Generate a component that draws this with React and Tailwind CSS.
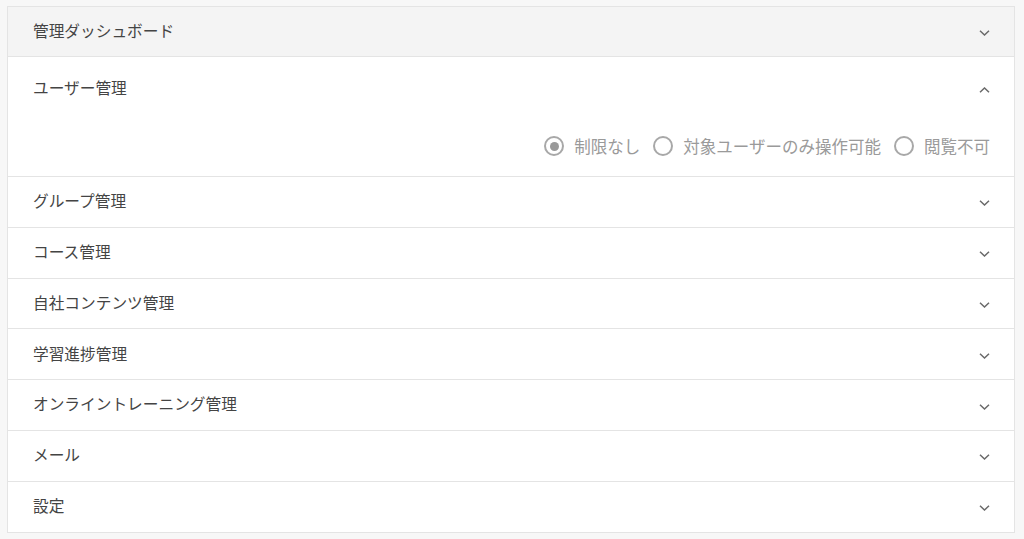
import { useState } from 'react';

const sections = [
  'ユーザー管理',
  'グループ管理',
  'コース管理',
  '自社コンテンツ管理',
  '学習進捗管理',
  'オンライントレーニング管理',
  'メール',
  '設定',
];

const options = ['制限なし', '対象ユーザーのみ操作可能', '閲覧不可'];

function Chevron({ up }) {
  return (
    <svg width="11" height="6" viewBox="0 0 11 6" fill="none" className="text-[#6a6a6a] mt-[3px]">
      <path
        d={up ? 'M1 5.2 L5.5 1 L10 5.2' : 'M1 0.8 L5.5 5 L10 0.8'}
        stroke="currentColor"
        strokeWidth="1.5"
      />
    </svg>
  );
}

function Radio({ checked, label, onClick }) {
  return (
    <button onClick={onClick} className="flex items-center gap-[10px] text-[#9a9a9a]">
      <span className="w-[20px] h-[20px] rounded-full border-2 border-[#a8a8a8] flex items-center justify-center">
        {checked && <span className="w-[9px] h-[9px] rounded-full bg-[#9a9a9a]" />}
      </span>
      <span>{label}</span>
    </button>
  );
}

export default function App() {
  const [open, setOpen] = useState('ユーザー管理');
  const [perm, setPerm] = useState('制限なし');

  return (
    <div
      className="min-h-[539px] bg-[#f7f7f7] pt-[6px] px-[7px] pb-[6px] text-[15.7px] text-[#444]"
      style={{ fontFamily: '"Noto Sans CJK JP", "Noto Sans", sans-serif' }}
    >
      <div className="w-[1008px] bg-white border border-[#e4e4e4]">
        <div className="h-[50px] bg-[#f4f4f4] flex items-center justify-between pl-[25px] pr-[24px] border-b border-[#e4e4e4]">
          <span className="-mt-[2px]">管理ダッシュボード</span>
          <Chevron />
        </div>
        {sections.map((s, i) => {
          const isOpen = open === s;
          return (
            <div key={s} className={i < sections.length - 1 ? 'border-b border-[#e4e4e4]' : ''}>
              <button
                onClick={() => setOpen(isOpen ? null : s)}
                className={`w-full flex items-center justify-between pl-[25px] pr-[24px] text-left ${isOpen ? 'h-[62px]' : 'h-[49.8px]'}`}
              >
                <span className={isOpen ? '' : '-mt-[2px]'}>{s}</span>
                <Chevron up={isOpen} />
              </button>
              {isOpen && (
                <div className="flex justify-end gap-[13px] pr-[24px] pt-[16px] pb-[19px] leading-[22px] text-[16.5px]">
                  {options.map(o => (
                    <Radio key={o} label={o} checked={perm === o} onClick={() => setPerm(o)} />
                  ))}
                </div>
              )}
            </div>
          );
        })}
      </div>
    </div>
  );
}
